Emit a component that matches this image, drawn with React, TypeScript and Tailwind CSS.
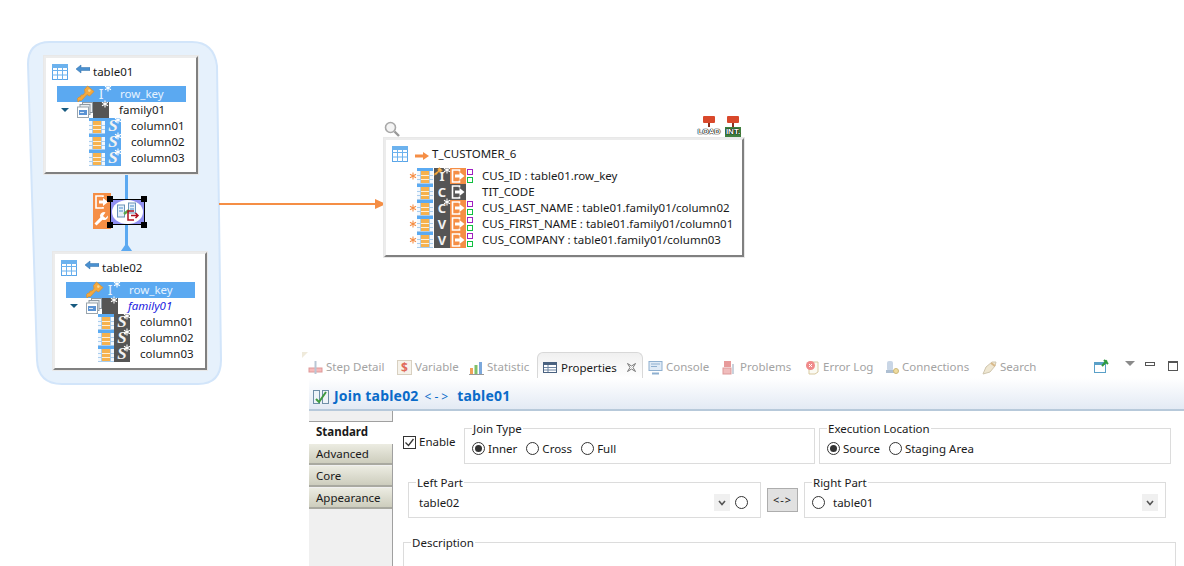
import type { ReactNode } from "react";

const ui = "font-['Noto_Sans',sans-serif] text-[11.5px] leading-4 text-[#1a1a1a]";

function Star({ color = "#fff", className = "" }: { color?: string; className?: string }) {
  return (
    <svg width="8" height="8" viewBox="0 0 8 8" className={`shrink-0 ${className}`}>
      <path d="M4 0.5v7M1 2.2l6 3.6M7 2.2 1 5.8" stroke={color} strokeWidth="1.1" />
    </svg>
  );
}

function TableIcon() {
  return (
    <svg width="16" height="16" viewBox="0 0 16 16" className="shrink-0">
      <rect x="0.5" y="0.5" width="15" height="15" fill="#fff" stroke="#5aa5e8" />
      <rect x="0" y="0" width="16" height="4" fill="#6cb2ee" />
      <path d="M5.5 0v16M10.5 0v16M0 6.5h16M0 11h16" stroke="#6cb2ee" />
    </svg>
  );
}

function ColumnIcon() {
  return (
    <svg width="16" height="16" viewBox="0 0 16 16" className="shrink-0">
      <rect width="16" height="3" fill="#5aaaf2" />
      <rect y="3" width="16" height="13" fill="#f3f8fd" />
      <rect x="4" y="3" width="8" height="13" fill="#f6b24e" />
      <path d="M0 7.5h4M12 7.5h4M0 11.5h4M12 11.5h4M0 15.5h16" stroke="#a9cdee" />
      <path d="M4 7.5h8M4 11.5h8" stroke="#fdf0d8" />
      <path d="M3.5 3v13M12.5 3v13" stroke="#a9cdee" />
    </svg>
  );
}

function KeyIcon({ size = 18 }: { size?: number }) {
  return (
    <svg width={size} height={size} viewBox="0 0 18 18" className="shrink-0">
      <path d="M10.5 1 17 6.5 12.5 11 10 9.5 4.5 15.5 2.5 15.5 1 17 0.5 13.5 2 12 3.5 12 4 10 6 10 8 7.5 7.5 4.5Z" fill="#f5a93f" stroke="#dc8f28" strokeWidth="0.7" />
      <circle cx="12.3" cy="5.6" r="1.3" fill="#fbd88f" />
    </svg>
  );
}

function FamilyIcon() {
  return (
    <svg width="16" height="16" viewBox="0 0 16 16" className="shrink-0">
      <rect x="5.5" y="0.5" width="10" height="10" fill="#eef1f4" stroke="#8f9aa3" />
      <rect x="3" y="2.5" width="10" height="10" fill="#e8ecef" stroke="#8f9aa3" />
      <rect x="0.5" y="5" width="11" height="10.5" fill="#fff" stroke="#9aa5ad" />
      <rect x="2" y="8" width="8" height="5" fill="#5b93d3" />
      <rect x="3" y="10" width="4" height="1" fill="#dbe9f7" />
    </svg>
  );
}

function OutIcon({ dark = false }: { dark?: boolean }) {
  return (
    <span className={`w-4 h-4 shrink-0 flex ${dark ? "bg-[#555555]" : "bg-[#f58e45]"}`}>
      <svg width="16" height="16" viewBox="0 0 16 16">
        <path d="M9.5 3.5V2H2.5V14H9.5V12.5" fill="none" stroke="#fff" strokeWidth="1.6" />
        <path d="M5 6.5H9.5V4L14.5 8 9.5 12V9.5H5Z" fill="#fff" />
      </svg>
    </span>
  );
}

function TypeBox({ letter, star, color, serif, hasKey }: { letter: string; star?: boolean; color: string; serif?: boolean; hasKey?: boolean }) {
  return (
    <span className={`relative w-4 h-4 shrink-0 flex items-center justify-center ${color}`}>
      <span className={`text-[#f2f2f2] leading-4 ${serif ? "font-['Liberation_Serif',serif] font-bold italic text-[17px]" : "font-bold text-[13px]"}`}>{letter}</span>
      {star && <Star className="absolute -top-[2px] -right-[1px]" />}
      {hasKey && <span className="absolute -top-px left-0"><KeyIcon size={9} /></span>}
    </span>
  );
}

function Tree({ family, dark }: { family: ReactNode; dark: boolean }) {
  return (
    <div className="flex flex-col ml-[11px] w-[129px]">
      <div className="flex items-center h-4 bg-[#5ba9f1] relative">
        <span className="absolute left-[20px] -top-px">
          <KeyIcon />
        </span>
        <span className="relative w-4 ml-[36px] text-center text-[#e6f3ff] text-[14px] leading-4">
          I
          <Star className="absolute -top-[2px] right-[-3px]" />
        </span>
        <span className="ml-[11px] text-[#e6f3ff]">row_key</span>
      </div>
      <div className="flex items-center h-4">
        <span className="ml-[4px] w-0 h-0 border-x-[4px] border-x-transparent border-t-[4px] border-t-[#175a80]" />
        <span className="ml-[8px]"><FamilyIcon /></span>
        <span className="relative w-4 h-4 bg-[#555555]">
          <Star className="absolute -top-[2px] right-0" />
        </span>
        <span className="ml-[10px]">{family}</span>
      </div>
      {["column01", "column02", "column03"].map((c) => (
        <div key={c} className="flex items-center h-4 pl-[32px]">
          <ColumnIcon />
          <TypeBox letter="S" star serif color={dark ? "bg-[#555555]" : "bg-[#5ba9f1]"} />
          <span className="ml-[10px]">{c}</span>
        </div>
      ))}
    </div>
  );
}

const cardBox = "absolute bg-white border-2 border-[#ececec] border-r-[#808080] border-b-[#808080] shadow-[0_0_0_1px_#e8e8e8]";

function SourceCard({ name, family, dark, className }: { name: string; family: ReactNode; dark: boolean; className: string }) {
  return (
    <div className={`${cardBox} w-[154px] h-[118px] pt-[6px] ${className}`}>
      <div className="flex items-center h-[16px] pl-[6px] mb-[6px]">
        <TableIcon />
        <svg width="14" height="10" viewBox="0 0 14 10" className="ml-[8px] -mt-[6px]">
          <path d="M0 5 5 1V3.5H14V6.5H5V9Z" fill="#4a90d0" stroke="#2e6ea8" strokeWidth="0.5" />
        </svg>
        <span className="ml-[3px]">{name}</span>
      </div>
      <Tree family={family} dark={dark} />
    </div>
  );
}

const targetRows = [
  { star: true, type: "I", typeStar: true, hasKey: true, text: "CUS_ID : table01.row_key", mapped: true },
  { star: false, type: "C", typeStar: false, hasKey: false, text: "TIT_CODE", mapped: false },
  { star: true, type: "C", typeStar: true, hasKey: false, text: "CUS_LAST_NAME : table01.family01/column02", mapped: true },
  { star: true, type: "V", typeStar: false, hasKey: false, text: "CUS_FIRST_NAME : table01.family01/column01", mapped: true },
  { star: true, type: "V", typeStar: false, hasKey: false, text: "CUS_COMPANY : table01.family01/column03", mapped: true },
];

function TargetCard() {
  return (
    <div className={`${cardBox} left-[384px] top-[138px] w-[360px] h-[119px] pt-[6px]`}>
      <div className="flex items-center h-4 pl-[6px] mb-[6px]">
        <TableIcon />
        <svg width="14" height="8" viewBox="0 0 14 8" className="ml-[7px] mt-[4px]">
          <path d="M0 2.5H8V0L14 4 8 8V5.5H0Z" fill="#f58e45" />
        </svg>
        <span className="ml-[3px]">T_CUSTOMER_6</span>
      </div>
      {targetRows.map((r) => (
        <div key={r.text} className="flex items-center h-4 pl-[23px]">
          <span className="w-[8px] shrink-0 flex">{r.star && <Star color="#f58e45" />}</span>
          <ColumnIcon />
          <span className="ml-px"><TypeBox letter={r.type} star={r.typeStar} hasKey={r.hasKey} color="bg-[#555555]" /></span>
          <OutIcon dark={!r.mapped} />
          <span className="w-[6px] ml-[1px] flex flex-col gap-[2px] shrink-0">
            {r.mapped && <span className="w-[6px] h-[6px] border-[1.5px] border-[#a020c0]" />}
            {r.mapped && <span className="w-[6px] h-[6px] border-[1.5px] border-[#10c040]" />}
          </span>
          <span className="ml-[9px] whitespace-nowrap">{r.text}</span>
        </div>
      ))}
    </div>
  );
}

function Handle({ className }: { className: string }) {
  return <span className={`absolute w-[6px] h-[6px] bg-black ${className}`} />;
}

function JoinNode() {
  return (
    <>
      <div className="absolute left-[93px] top-[193px] w-[18px] h-[36px] bg-[#f58e45] flex flex-col items-start gap-[1px] pt-[1px]">
        <svg width="16" height="16" viewBox="0 0 16 16"><path d="M10 3V2H3V14H10V13" fill="none" stroke="#fff" strokeWidth="1.6" /><path d="M6 6.5H10V4L15 8 10 12V9.5H6Z" fill="#fff" /></svg>
        <svg width="16" height="16" viewBox="0 0 16 16"><path d="M11 1a4 4 0 0 0-3.7 5.5L1.5 12.5 3.5 14.5 9.5 8.7A4 4 0 0 0 15 4.5L12.5 7 10 5 12.5 1.6A4 4 0 0 0 11 1Z" fill="#fff" /></svg>
      </div>
      <div className="absolute left-[110px] top-[199px] w-[35px] h-[26px] bg-[#8f8ff0] border border-black flex items-center justify-center">
        <span className="w-[31px] h-[24px] bg-white rounded-[50%] flex items-center justify-center">
          <svg width="24" height="20" viewBox="0 0 24 20">
            <rect x="1.5" y="3" width="7" height="12" fill="#e6f0f8" stroke="#6a93b8" />
            <rect x="12.5" y="1" width="7" height="10" fill="#e6f0f8" stroke="#6a93b8" />
            <path d="M3 6h4M3 9h4M14 4h4M14 7h4" stroke="#4a90d0" />
            <path d="M8 12 13 8" stroke="#5aa84a" strokeWidth="2.4" />
            <path d="M18 9H12V18H18M15 13.5H22M19.5 11 22 13.5 19.5 16" fill="none" stroke="#b01020" strokeWidth="1.5" />
          </svg>
        </span>
      </div>
      <Handle className="left-[107px] top-[196px]" />
      <Handle className="left-[141px] top-[196px]" />
      <Handle className="left-[107px] top-[222px]" />
      <Handle className="left-[141px] top-[222px]" />
    </>
  );
}

function StageIcon({ label, labelBg }: { label: string; labelBg: string }) {
  return (
    <span className="flex flex-col items-center w-[22px]">
      <svg width="12" height="11" viewBox="0 0 12 11">
        <rect x="0" y="0" width="12" height="7" rx="1" fill="#d9482b" />
        <rect x="5" y="7" width="2" height="4" fill="#8a3020" />
      </svg>
      <span className={`h-[10px] px-px font-['Liberation_Sans',sans-serif] font-bold text-[8px] leading-[10px] text-white [text-shadow:0_0_1px_#000,0_0_1px_#000,0_0_1px_#000] ${labelBg}`}>{label}</span>
    </span>
  );
}

function Canvas() {
  return (
    <div className={`relative h-[352px] shrink-0 ${ui}`}>
      <svg width="240" height="352" viewBox="0 0 240 352" className="absolute left-0 top-0 overflow-visible">
        <path
          d="M50 42H192Q214 42 217 66L221 360Q221 384 198 384H62Q38 384 37 360L28 64Q28 42 50 42Z"
          fill="#e6f1fc"
          stroke="#d2e5fa"
          strokeWidth="2"
        />
        <rect x="125" y="174" width="3" height="80" fill="#5ba9f1" />
        <path d="M126.5 243 133.5 253H119.5Z" fill="#5ba9f1" />
      </svg>
      <svg width="170" height="14" viewBox="0 0 170 14" className="absolute left-[219px] top-[197px]">
        <path d="M0 7H158" stroke="#f58e45" strokeWidth="2" />
        <path d="M156 2 167 7 156 12Z" fill="#f58e45" />
      </svg>
      <SourceCard name="table01" family="family01" dark={false} className="left-[44px] top-[56px]" />
      <SourceCard name="table02" family={<span className="italic text-[#1a1ae0]">family01</span>} dark className="left-[53px] top-[252px]" />
      <JoinNode />
      <TargetCard />
      <svg width="16" height="16" viewBox="0 0 16 16" className="absolute left-[384px] top-[121px]">
        <circle cx="6.5" cy="6.5" r="5" fill="#f4f4f4" stroke="#a8a8a8" strokeWidth="1.6" />
        <path d="M10.5 10.5 15 15" stroke="#9a9a9a" strokeWidth="2.4" />
      </svg>
      <div className="absolute left-[698px] top-[116px] flex gap-[2px]">
        <StageIcon label="LOAD" labelBg="bg-white" />
        <StageIcon label="INT." labelBg="bg-[#3f7f3f]" />
      </div>
    </div>
  );
}

const tabIcons: Record<string, ReactNode> = {
  step: <><rect x="1" y="8" width="13" height="4" fill="#f7b9b9" stroke="#d99" /><path d="M7.5 1v13" stroke="#b9c6d4" strokeWidth="2" /></>,
  variable: <><rect x="0.5" y="0.5" width="14" height="14" fill="#f6f2ea" stroke="#d8d0c0" /><text x="7.5" y="12" fontSize="12" fontWeight="700" textAnchor="middle" fill="#e06a5a">$</text></>,
  statistic: <><rect x="1" y="8" width="3" height="6" fill="#f2a25a" /><rect x="5.5" y="5" width="3" height="9" fill="#7fc06a" /><rect x="10" y="2" width="3" height="12" fill="#7ba8dc" /><path d="M0 14.5h15" stroke="#999" /></>,
  properties: <><rect x="0.5" y="2.5" width="13" height="10" fill="#fff" stroke="#4a6280" /><rect x="1" y="3" width="12" height="2" fill="#4a6280" /><path d="M1 7.5h12M1 10h12M5 5v7" stroke="#6f86a3" /></>,
  console: <><rect x="1" y="1.5" width="13" height="9" fill="#dfeaf6" stroke="#8fb0d0" /><path d="M3 4h9M3 6.5h6" stroke="#8fb0d0" /><path d="M4 13.5h7" stroke="#8fb0d0" strokeWidth="2" /></>,
  problems: <><rect x="2" y="1" width="7" height="6" fill="#e79a9a" /><rect x="1" y="8" width="8" height="6" fill="#f0bcbc" stroke="#d99" /><path d="M11 4v10" stroke="#c9d2dc" strokeWidth="2" /></>,
  error: <><path d="M4 2h9v10l-3 2H4Z" fill="#fbfaf2" stroke="#d8c9a0" /><circle cx="5.5" cy="5.5" r="4.5" fill="#f08a8a" /><path d="M4 4l3 3M7 4l-3 3" stroke="#fff" /></>,
  connections: <><rect x="3" y="1" width="6" height="10" rx="2" fill="#c9d6e6" /><rect x="2" y="10" width="8" height="3" fill="#aebfd2" /><circle cx="12" cy="11" r="2.5" fill="#efdca0" stroke="#cdb87a" /></>,
  search: <><path d="M1 14 4 7 10 2 14 2 13 6 8 12Z" fill="#efe7d2" stroke="#cfc6ae" /><path d="M9 3 13 6" stroke="#d9b98a" strokeWidth="2" /></>,
};

function TabIcon({ name }: { name: string }) {
  return (
    <svg width="15" height="15" viewBox="0 0 15 15" className="shrink-0">
      {tabIcons[name]}
    </svg>
  );
}

const tabs = [
  { id: "step", label: "Step Detail", w: "w-[89px]" },
  { id: "variable", label: "Variable", w: "w-[72px]" },
  { id: "statistic", label: "Statistic", w: "w-[68px]" },
];
const tabsAfter = [
  { id: "console", label: "Console", w: "w-[74px]" },
  { id: "problems", label: "Problems", w: "w-[83px]" },
  { id: "error", label: "Error Log", w: "w-[79px]" },
  { id: "connections", label: "Connections", w: "w-[98px]" },
  { id: "search", label: "Search", w: "w-[70px]" },
];

function Tab({ id, label, w }: { id: string; label: string; w: string }) {
  return (
    <div className={`flex items-center gap-[3px] h-full pt-[4px] ${w}`}>
      <TabIcon name={id} />
      <span className="text-[#a3a3a3] whitespace-nowrap">{label}</span>
    </div>
  );
}

function TabBar() {
  return (
    <div className="flex items-center h-[26px] pl-[6px] pr-[6px] relative">
      <svg width="6" height="6" viewBox="0 0 6 6" className="absolute left-0 top-0">
        <path d="M0 0H6L0 6Z" fill="#efeadb" />
      </svg>
      {tabs.map((t) => <Tab key={t.id} {...t} />)}
      <div className="flex items-center gap-[3px] w-[106px] h-full mr-[5px] pl-[5px] pt-[4px] rounded-t-[6px] border border-b-0 border-[#d8d8d8] bg-gradient-to-b from-[#f0f0f0] to-white">
        <TabIcon name="properties" />
        <span className="text-[#1a1a1a] whitespace-nowrap">Properties</span>
        <svg width="11" height="11" viewBox="0 0 11 11" className="ml-[6px]">
          <path d="M1.5 1.5 5.5 4 9.5 1.5 7 5.5 9.5 9.5 5.5 7 1.5 9.5 4 5.5Z" fill="#fff" stroke="#777" />
        </svg>
      </div>
      {tabsAfter.map((t) => <Tab key={t.id} {...t} />)}
      <div className="flex items-center ml-auto pt-[2px]">
        <svg width="15" height="14" viewBox="0 0 15 14">
          <rect x="0.5" y="3.5" width="11" height="10" fill="#fff" stroke="#5aa0c8" />
          <rect x="1" y="4" width="10" height="2" fill="#5aa0c8" />
          <path d="M8 7 13 1.5M10 1 14 5" stroke="#2f9a3f" strokeWidth="2" />
        </svg>
        <span className="ml-[16px] w-0 h-0 border-x-[5px] border-x-transparent border-t-[5px] border-t-[#8a8a8a] -mt-[6px]" />
        <span className="ml-[10px] w-[10px] h-[4px] border border-[#555] -mt-[4px]" />
        <span className="ml-[13px] w-[10px] h-[10px] border border-[#555] border-t-2" />
      </div>
    </div>
  );
}

function SideTab({ label }: { label: string }) {
  return (
    <div className="h-[21px] pl-[7px] flex items-center border-b-2 border-[#a9a9a0] bg-gradient-to-b from-[#ececE2] to-[#cdcdbd] mb-px">
      {label}
    </div>
  );
}

function Radio({ label, checked }: { label?: string; checked?: boolean }) {
  return (
    <span className="flex items-center gap-[3px]">
      <span className="w-[13px] h-[13px] rounded-full border border-[#333] bg-white flex items-center justify-center shrink-0">
        {checked && <span className="w-[7px] h-[7px] rounded-full bg-[#333]" />}
      </span>
      {label && <span>{label}</span>}
    </span>
  );
}

function Group({ legend, className, children }: { legend: string; className: string; children?: ReactNode }) {
  return (
    <div className={`relative border border-[#dcdcdc] ${className}`}>
      <span className="absolute -top-[8px] left-[7px] bg-white px-px whitespace-nowrap">{legend}</span>
      {children}
    </div>
  );
}

function ComboArrow() {
  return (
    <span className="w-4 h-[17px] bg-[#f0f0f0] flex items-center justify-center shrink-0">
      <svg width="8" height="6" viewBox="0 0 8 6"><path d="M1 1 4 4.5 7 1" fill="none" stroke="#555" strokeWidth="1.6" /></svg>
    </span>
  );
}

function Form() {
  return (
    <div className="flex-1 flex flex-col pl-[10px] pt-[17px]">
      <div className="flex items-start">
        <label className="flex items-center gap-[3px] w-[61px] h-[28px]">
          <span className="w-[13px] h-[13px] border border-[#333] flex items-center justify-center shrink-0">
            <svg width="11" height="11" viewBox="0 0 11 11"><path d="M1.5 5.5 4.5 8.5 9.5 2" fill="none" stroke="#333" strokeWidth="1.3" /></svg>
          </span>
          Enable
        </label>
        <Group legend="Join Type" className="w-[351px] h-[36px] flex items-center gap-[9px] pl-[7px] pt-[5px]">
          <Radio label="Inner" checked />
          <Radio label="Cross" />
          <Radio label="Full" />
        </Group>
        <Group legend="Execution Location" className="w-[352px] h-[36px] ml-[4px] flex items-center gap-[9px] pl-[7px] pt-[5px]">
          <Radio label="Source" checked />
          <Radio label="Staging Area" />
        </Group>
      </div>
      <div className="flex items-center mt-[18px] pl-[5px]">
        <Group legend="Left Part" className="w-[353px] h-[36px] flex items-center pl-[10px] pr-[12px] pt-[5px]">
          <span className="flex-1">table02</span>
          <ComboArrow />
          <span className="ml-[5px]"><Radio /></span>
        </Group>
        <button className="w-[31px] h-[24px] ml-[6px] bg-[#e1e1e1] border border-[#adadad] text-[11px] tracking-[1px]">{"<->"}</button>
        <Group legend="Right Part" className="w-[362px] h-[36px] ml-[6px] flex items-center pl-[7px] pr-[7px] pt-[5px]">
          <Radio />
          <span className="flex-1 ml-[8px]">table01</span>
          <ComboArrow />
        </Group>
      </div>
      <Group legend="Description" className="mt-[24px] w-[773px] flex-1 border-b-0" />
    </div>
  );
}

function PropertiesPanel() {
  return (
    <div className={`flex flex-col flex-1 min-h-0 pl-[302px] ${ui}`}>
      <TabBar />
      <div className="ml-[7px] h-[33px] shrink-0 flex items-center pl-[4px] pt-[6px] border-b-2 border-[#b7c9da] bg-gradient-to-b from-white to-[#e3eaf4]">
        <svg width="16" height="16" viewBox="0 0 16 16" className="shrink-0">
          <rect x="0.5" y="1.5" width="6" height="13" fill="#eef4f8" stroke="#6f8fa8" />
          <rect x="9.5" y="1.5" width="6" height="13" fill="#eef4f8" stroke="#6f8fa8" />
          <path d="M3 10 6 13 13 3" fill="none" stroke="#3f9a3f" strokeWidth="2" />
        </svg>
        <span className="ml-[5px] text-[14px] font-bold tracking-[0.2px] text-[#0a6bc9] whitespace-nowrap">
          Join table02<span className="mx-[6px] font-normal tracking-[3px] text-[12px]">{"<->"}</span>table01
        </span>
      </div>
      <div className="ml-[7px] flex flex-1 min-h-0">
        <div className="w-[84px] shrink-0 bg-[#f0f0f0] border-r border-[#a0a0a0] pt-[10px] flex flex-col">
          <div className="h-[23px] pl-[7px] pb-[2px] flex items-center font-bold bg-white border-t border-[#a0a0a0] -mr-px">Standard</div>
          <SideTab label="Advanced" />
          <SideTab label="Core" />
          <SideTab label="Appearance" />
        </div>
        <Form />
      </div>
    </div>
  );
}

export default function App() {
  return (
    <div className="w-[1184px] h-[566px] bg-white overflow-hidden flex flex-col">
      <Canvas />
      <PropertiesPanel />
    </div>
  );
}
